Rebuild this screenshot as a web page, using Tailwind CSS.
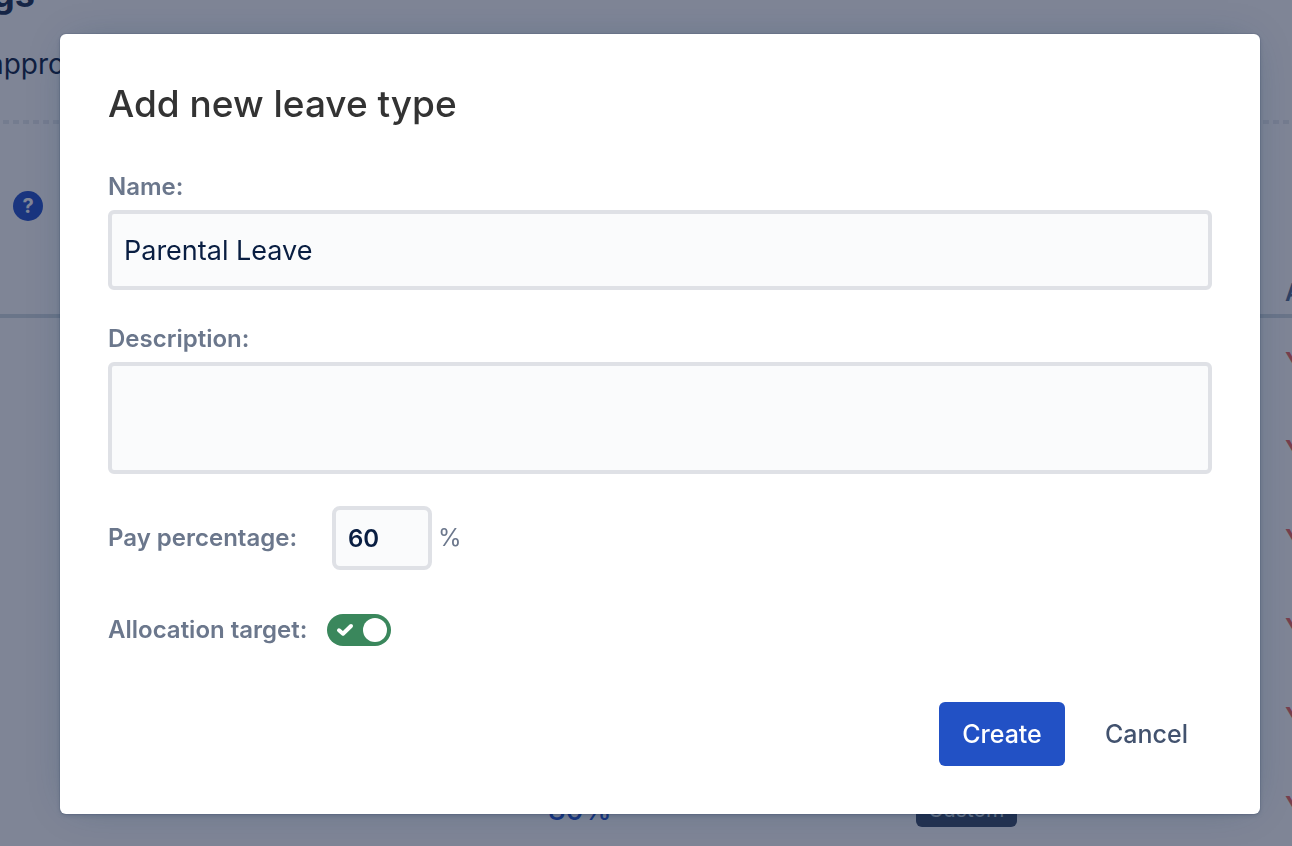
<!DOCTYPE html>
<html lang="en">
  <head>
    <meta charset="UTF-8" />
    <title>Add new leave type</title>
    <meta name="viewport" content="width=device-width, initial-scale=1.0" />
    <script src="https://cdn.jsdelivr.net/npm/@tailwindcss/browser@4"></script>
    <style>
      body {
        font-family: Inter, 'Liberation Sans', sans-serif;
      }
    </style>
  </head>
  <body class="h-screen overflow-hidden bg-white">
    <!-- Settings page behind the dialog -->
    <main class="-mt-8 w-full text-[#172B4D]">
      <h1 class="-ml-2 h-[52px] text-4xl leading-[52px] font-bold text-[#253858]">gs</h1>
      <p class="-ml-3 mt-6 h-10 text-[28px] leading-10">approval</p>
      <div class="mt-9 h-1 bg-[repeating-linear-gradient(90deg,transparent_0_3px,#E9ECF0_3px_9px,transparent_9px_10px)]"></div>
      <div class="mt-[67px] ml-[13px]">
        <button type="button" aria-label="Help" class="flex size-[30px] items-center justify-center rounded-full bg-[#2C59D0] text-xl font-bold text-white">?</button>
      </div>

      <table class="mt-[51px] w-full table-fixed border-collapse text-left">
        <colgroup>
          <col class="w-[548px]" />
          <col class="w-[368px]" />
          <col class="w-[369px]" />
          <col />
        </colgroup>
        <thead>
          <tr class="h-11 border-b-4 border-[#D3DDE3] text-2xl font-semibold text-[#587296]">
            <th></th>
            <th></th>
            <th></th>
            <th class="p-0 font-semibold">A</th>
          </tr>
        </thead>
        <tbody class="text-[26px] font-semibold text-[#EE6E66]">
          <tr class="h-[89px]"><td></td><td></td><td></td><td class="p-0">Y</td></tr>
          <tr class="h-[89px]"><td></td><td></td><td></td><td class="p-0">Y</td></tr>
          <tr class="h-[89px]"><td></td><td></td><td></td><td class="p-0">Y</td></tr>
          <tr class="h-[89px]"><td></td><td></td><td></td><td class="p-0">Y</td></tr>
          <tr class="h-[89px]"><td></td><td></td><td></td><td class="p-0">Y</td></tr>
          <tr class="h-[89px]">
            <td></td>
            <td class="p-0 pt-2"><a href="#" class="text-[28px] font-medium text-[#2C59D0]">80%</a></td>
            <td class="p-0 pt-1">
              <span class="inline-block rounded-md bg-[#42526E] px-3 text-[21px] leading-[34px] font-normal text-[#D3E0E8]">Custom</span>
            </td>
            <td class="p-0">Y</td>
          </tr>
        </tbody>
      </table>
    </main>

    <div class="fixed inset-0 bg-[#091636]/52 pt-[34px] pr-8 pl-[60px]">
      <section role="dialog" aria-labelledby="dialog-title" class="rounded-md bg-white p-12 shadow-[0_0_0_1px_rgba(9,30,66,0.08),0_2px_4px_rgba(9,30,66,0.16),0_0_40px_-12px_rgba(9,50,90,0.3)]">
        <h2 id="dialog-title" class="text-[37px] leading-[44px] font-medium text-[#333333]">Add new leave type</h2>

        <form class="mt-12 text-2xl leading-[26px] font-semibold text-[#6B778C]">
          <label for="name" class="block">Name:</label>
          <input id="name" type="text" value="Parental Leave" class="mt-[10px] block h-20 w-full rounded-md border-4 border-[#DFE1E6] bg-[#FAFBFC] px-3 text-[27px] font-normal text-[#091E42]" />

          <label for="description" class="mt-9 block">Description:</label>
          <textarea id="description" class="mt-[10px] block h-28 w-full resize-none rounded-md border-4 border-[#DFE1E6] bg-[#FAFBFC] px-3 py-2 text-[27px] font-normal text-[#091E42]"></textarea>

          <div class="mt-8 flex items-center">
            <label for="pay" class="w-56">Pay percentage:</label>
            <input id="pay" type="text" inputmode="numeric" value="60" class="h-16 w-[100px] rounded-lg border-4 border-[#DFE1E6] bg-[#FAFBFC] px-3 text-[#091E42]" />
            <span class="ml-1.5 font-normal">%</span>
          </div>

          <div class="mt-11 flex items-center gap-5">
            <label for="allocation">Allocation target:</label>
            <span class="relative h-8 w-16">
              <input id="allocation" type="checkbox" checked class="block h-8 w-16 appearance-none rounded-full bg-[#7A869A] checked:bg-[#3A875C]" />
              <svg class="pointer-events-none absolute inset-0" width="64" height="32" viewBox="0 0 64 32" fill="none">
                <path d="M12 16.3l4 3.4 8-7.7" stroke="#fff" stroke-width="4" stroke-linecap="round" stroke-linejoin="round" />
                <circle cx="48" cy="16" r="12" fill="#fff" />
              </svg>
            </span>
          </div>

          <div class="mt-14 flex justify-end text-[25px] font-medium">
            <button type="button" class="h-16 w-[126px] rounded-md bg-[#2251C5] text-white">Create</button>
            <button type="button" class="ml-4 h-16 px-6 text-[#42526E]">Cancel</button>
          </div>
        </form>
      </section>
    </div>
  </body>
</html>
